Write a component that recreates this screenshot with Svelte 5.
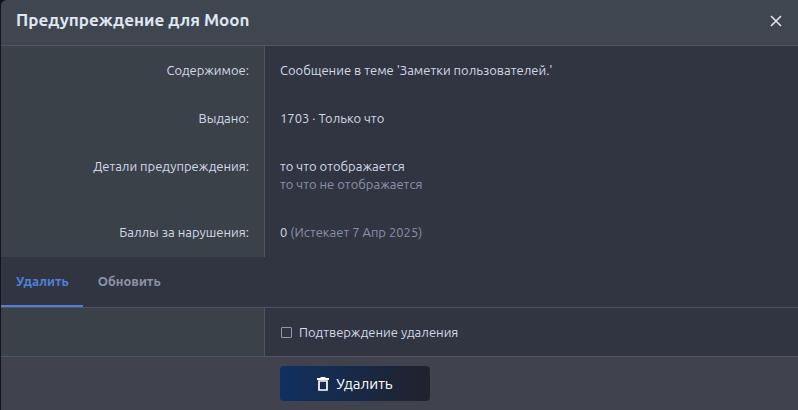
<script>
  const tabs = ['Удалить', 'Обновить'];
  let active = $state(0);
  let confirmed = $state(false);
</script>

<div class="backdrop">
  <section class="overlay" role="dialog" aria-labelledby="overlay-title">
    <header>
      <h1 id="overlay-title">Предупреждение для Moon</h1>
      <button class="close" type="button" aria-label="Закрыть">
        <svg width="12" height="12" viewBox="0 0 12 12" aria-hidden="true">
          <path d="M1 1 11 11M11 1 1 11" fill="none" stroke="currentColor" stroke-width="1.6" />
        </svg>
      </button>
    </header>

    <dl>
      <div class="row">
        <dt>Содержимое:</dt>
        <dd>Сообщение в теме 'Заметки пользователей.'</dd>
      </div>
      <div class="row">
        <dt>Выдано:</dt>
        <dd>1703 · Только что</dd>
      </div>
      <div class="row">
        <dt>Детали предупреждения:</dt>
        <dd>
          то что отображается
          <div class="muted">то что не отображается</div>
        </dd>
      </div>
      <div class="row last">
        <dt>Баллы за нарушения:</dt>
        <dd>0 <span class="muted">(Истекает 7 Апр 2025)</span></dd>
      </div>
    </dl>

    <div class="tabs" role="tablist">
      {#each tabs as tab, i}
        <button
          type="button"
          role="tab"
          aria-selected={active === i}
          class:active={active === i}
          onclick={() => (active = i)}>{tab}</button>
      {/each}
    </div>

    <form onsubmit={(e) => e.preventDefault()}>
      <div class="row">
        <div class="term"></div>
        <div class="value">
          <label>
            <input type="checkbox" bind:checked={confirmed} />
            <span>Подтверждение удаления</span>
          </label>
        </div>
      </div>
      <div class="row submit">
        <div class="actions">
          <button class="primary" type="submit">
            <svg width="12" height="14" viewBox="0 0 12 14" aria-hidden="true">
              <path d="M0 1H3L4 0H8L9 1H12V3H0Z" fill="currentColor" />
              <path d="M2 4V13H10V4Z" fill="none" stroke="currentColor" stroke-width="1.7" />
            </svg>
            Удалить
          </button>
        </div>
      </div>
    </form>
  </section>
</div>

<style>
  :global(body) {
    background: #14151a;
  }
  .backdrop {
    padding-left: 1px;
    font: 13px/18px Ubuntu, 'Noto Sans', sans-serif;
    color: #d3d9e6;
  }
  .overlay {
    background: #303541;
    border-radius: 6px 0 0 0;
    overflow: hidden;
  }
  button {
    font: inherit;
    border: 0;
    cursor: pointer;
  }
  header {
    display: flex;
    align-items: center;
    justify-content: space-between;
    height: 45px;
    padding: 0 16px 0 15px;
    background: #40464f;
    border-bottom: 1px solid #50545f;
  }
  h1 {
    margin: 0;
    padding-bottom: 5px;
    font-size: 17px;
    line-height: 24px;
    font-weight: 600;
    color: #dfe5f2;
  }
  .close {
    display: flex;
    padding: 0 0 4px;
    background: none;
    color: #dfe5f2;
  }
  dl,
  dd {
    margin: 0;
  }
  .row {
    display: grid;
    grid-template-columns: 264px 1fr;
  }
  .last {
    min-height: 49px;
  }
  dt,
  .term {
    padding: 15px;
    text-align: right;
    background: #3b4149;
    border-right: 1px solid #50545f;
  }
  dd,
  .value {
    padding: 15px;
  }
  .muted {
    color: #8b90a8;
  }
  .tabs {
    display: flex;
    border-bottom: 1px solid #50545f;
  }
  .tabs button {
    padding: 15px 14px 14px 15px;
    line-height: 19px;
    font-weight: 600;
    color: #8d93a8;
    background: none;
    border-bottom: 2px solid transparent;
  }
  .tabs .active {
    color: #5080d8;
    border-bottom-color: #5080d8;
  }
  label {
    display: flex;
    align-items: center;
    gap: 7px;
    padding-left: 1px;
  }
  input {
    appearance: none;
    width: 11px;
    height: 11px;
    margin: 0;
    border: 1px solid #9297ae;
    border-radius: 1px;
  }
  input:checked {
    background: #5080d8;
  }
  .submit {
    background: #40434d;
    border-top: 1px solid #50545f;
  }
  .actions {
    grid-column: 2;
    padding: 9px 15px;
  }
  .primary {
    display: flex;
    align-items: center;
    justify-content: center;
    gap: 7px;
    min-width: 150px;
    height: 35px;
    font-size: 15px;
    color: #fff;
    border-radius: 4px;
    background: linear-gradient(90deg, #113060, #20222c);
  }
</style>
